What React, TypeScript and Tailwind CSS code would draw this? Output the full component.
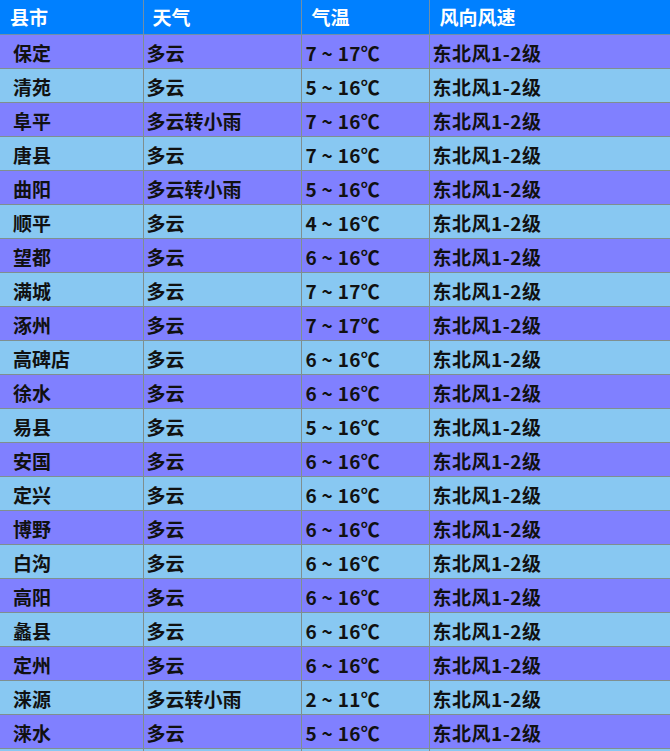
const rows: [string, string, string][] = [
  ["保定", "多云", "7 ~ 17℃"],
  ["清苑", "多云", "5 ~ 16℃"],
  ["阜平", "多云转小雨", "7 ~ 16℃"],
  ["唐县", "多云", "7 ~ 16℃"],
  ["曲阳", "多云转小雨", "5 ~ 16℃"],
  ["顺平", "多云", "4 ~ 16℃"],
  ["望都", "多云", "6 ~ 16℃"],
  ["满城", "多云", "7 ~ 17℃"],
  ["涿州", "多云", "7 ~ 17℃"],
  ["高碑店", "多云", "6 ~ 16℃"],
  ["徐水", "多云", "6 ~ 16℃"],
  ["易县", "多云", "5 ~ 16℃"],
  ["安国", "多云", "6 ~ 16℃"],
  ["定兴", "多云", "6 ~ 16℃"],
  ["博野", "多云", "6 ~ 16℃"],
  ["白沟", "多云", "6 ~ 16℃"],
  ["高阳", "多云", "6 ~ 16℃"],
  ["蠡县", "多云", "6 ~ 16℃"],
  ["定州", "多云", "6 ~ 16℃"],
  ["涞源", "多云转小雨", "2 ~ 11℃"],
  ["涞水", "多云", "5 ~ 16℃"],
]

export default function App() {
  return (
    <div className="w-[670px] overflow-hidden font-['Noto_Sans_CJK_SC',sans-serif] font-bold text-[19px]">
      <table className="w-[670px] table-fixed border-collapse">
        <colgroup>
          <col className="w-[143px]" />
          <col className="w-[158px]" />
          <col className="w-[128px]" />
          <col />
        </colgroup>
        <thead>
          <tr className="h-[34px] bg-[#0080ff] text-white">
            <th className="border-r border-b border-[#6f8fa8] pl-[10px] text-left font-bold">县市</th>
            <th className="border-r border-b border-[#6f8fa8] pl-[9px] text-left font-bold">天气</th>
            <th className="border-r border-b border-[#6f8fa8] pl-[10px] text-left font-bold">气温</th>
            <th className="border-b border-[#6f8fa8] pl-[10px] text-left font-bold">风向风速</th>
          </tr>
        </thead>
        <tbody>
          {rows.map(([city, weather, temp], i) => (
            <tr key={city} className={`h-[34px] text-[#111] ${i % 2 === 0 ? "bg-[#8080ff]" : "bg-[#88c8f2]"}`}>
              <td className="border-r border-b border-[#7f8f8f] pl-[13px] pt-[2px] leading-none">{city}</td>
              <td className="border-r border-b border-[#7f8f8f] pl-[3px] pt-[2px] leading-none">{weather}</td>
              <td className="border-r border-b border-[#7f8f8f] pl-[4px] pt-[2px] leading-none tracking-[0.3px]">{temp}</td>
              <td className="border-b border-[#7f8f8f] pl-[3px] pt-[2px] leading-none tracking-[0.5px]">东北风1-2级</td>
            </tr>
          ))}
          <tr className="h-[34px] bg-[#88c8f2]">
            <td className="border-r border-[#7f8f8f]"></td>
            <td className="border-r border-[#7f8f8f]"></td>
            <td className="border-r border-[#7f8f8f]"></td>
            <td></td>
          </tr>
        </tbody>
      </table>
    </div>
  )
}
